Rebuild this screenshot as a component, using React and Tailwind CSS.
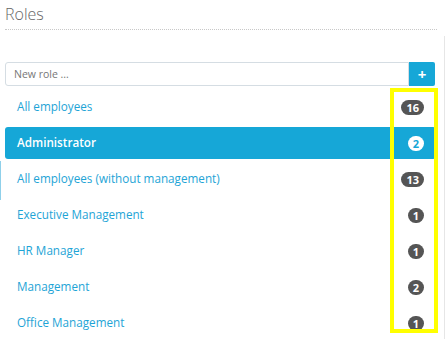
import React from "react";

const roles = [
  { name: "All employees", count: 16 },
  { name: "Administrator", count: 2, active: true },
  { name: "All employees (without management)", count: 13, focus: true },
  { name: "Executive Management", count: 1 },
  { name: "HR Manager", count: 1 },
  { name: "Management", count: 2 },
  { name: "Office Management", count: 1 },
];

export default function App() {
  return (
    <div
      className="relative w-[445px] h-[339px] overflow-hidden bg-white"
      style={{ fontFamily: '"Open Sans", "Liberation Sans", sans-serif' }}
    >
      <div className="px-[5px]">
        <h1 className="pt-[3px] text-[16px] leading-[22px] font-light text-[#666] w-[432px] pb-[4px] border-b border-dotted border-[#c8c8c8]">
          Roles
        </h1>
      </div>
      <div className="flex mt-[6px]">
        <div className="flex-1 pl-[5px] pr-[8px] pt-[26px]">
          <div className="flex h-[24px] w-[430px]">
            <input
              className="flex-1 min-w-0 h-full border border-[#d5dde3] rounded-l-[3px] px-[8px] text-[10.5px] text-[#555] placeholder:text-[#777] outline-none"
              placeholder="New role ..."
            />
            <button className="w-[26px] h-full bg-[#16a7d7] text-white text-[15px] font-bold leading-none rounded-r-[2px] flex items-center justify-center">
              +
            </button>
          </div>
          <ul className="mt-[5px] flex flex-col gap-[4px] w-[431px]">
            {roles.map((r) => (
              <li
                key={r.name}
                className={
                  "relative h-[32px] flex items-center justify-between pl-[12px] pr-[12px] rounded-[3px] text-[11.7px] " +
                  (r.active ? "bg-[#16a7d7] text-white font-semibold" : "text-[#1ea4d6]")
                }
              >
                {r.focus && (
                  <span className="absolute left-[-5px] top-[-2px] bottom-[-5px] w-px bg-[#8fd0ea]" />
                )}
                <span>{r.name}</span>
                <span
                  className={
                    "h-[15px] min-w-[16px] px-[5px] rounded-full text-[11px] font-bold leading-[15px] text-center " +
                    (r.active ? "bg-white text-[#16a7d7]" : "bg-[#555] text-white")
                  }
                >
                  {r.count}
                </span>
              </li>
            ))}
          </ul>
        </div>
        <div className="w-px h-[320px] bg-[#e6e6e6]" />
      </div>
      <div className="absolute left-[390px] top-[88px] w-[48px] h-[245px] border-[4px] border-[#ffff00]" />
    </div>
  );
}
